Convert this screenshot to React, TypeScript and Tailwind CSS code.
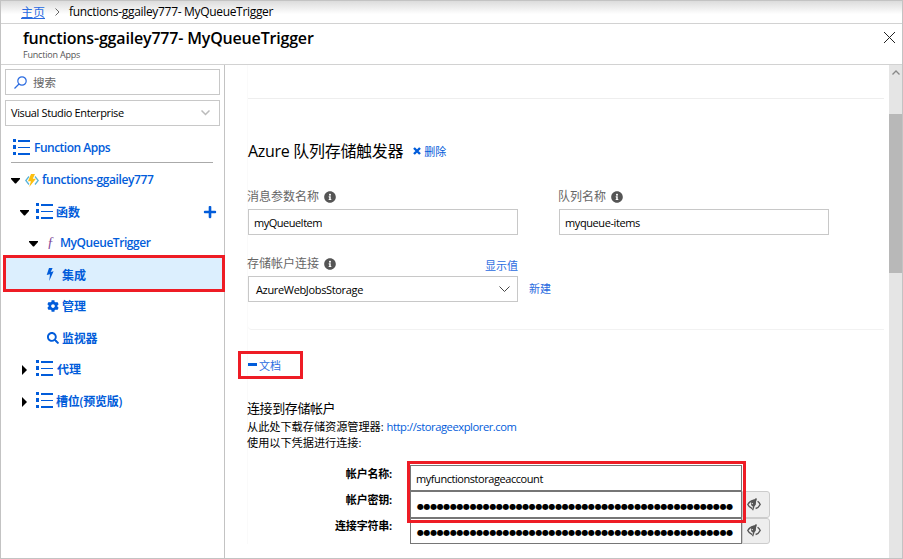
import type { ReactNode } from "react";
import { FaCog, FaInfoCircle, FaPlus, FaSearch } from "react-icons/fa";

const DOTS = "●".repeat(48);

function ListIcon({ className = "" }: { className?: string }) {
  return (
    <svg width="17" height="16" viewBox="0 0 17 16" fill="#015cda" className={"shrink-0 " + className} shapeRendering="crispEdges">
      <rect x="0" y="0" width="3" height="3" />
      <rect x="0" y="6" width="3" height="4" />
      <rect x="0" y="13" width="3" height="3" />
      <rect x="5" y="1" width="12" height="2" />
      <rect x="5" y="8" width="12" height="1" />
      <rect x="5" y="14" width="12" height="2" />
    </svg>
  );
}

function Caret({ open }: { open?: boolean }) {
  return open ? (
    <svg width="9" height="6" viewBox="0 0 9 6" className="mt-[2px] shrink-0"><path d="M0 0h9v1L5 5.500H4L0 1z" /></svg>
  ) : (
    <svg width="5" height="10" viewBox="0 0 5 10" className="mt-px shrink-0"><path d="M0 0v10L5 5z" /></svg>
  );
}

function FunctionAppIcon() {
  return (
    <svg width="14" height="13" viewBox="0 0 14 13" className="shrink-0" fill="none">
      <path d="M4 2.5L.8 6.5 4 10.5M10 2.5l3.2 4L10 10.5" stroke="#59b4d9" strokeWidth="1.3" />
      <path d="M6 0h4L7.800 4.700H11L4.200 13l1.700-5.800H3z" fill="#fcbf10" />
    </svg>
  );
}

function HiddenEye() {
  return (
    <svg width="14" height="13" viewBox="0 0 14 13" className="mb-[1px] shrink-0" fill="none" stroke="#555" strokeWidth="1.4">
      <path d="M5.200 10.600C3.200 9.800 1.600 8.300.8 6.500 2 4.300 4.200 2.600 7 2.200" />
      <path d="M9.300.3L8.700 7 6.200 8.800C3.600 8 3.300 4.500 5 2.600z" fill="#555" stroke="none" />
      <path d="M9.300.5L5.600 12.200" strokeWidth="1.300" />
      <path d="M10.600 3.200c1.100.8 2 1.900 2.600 3.300-.9 1.900-2.500 3.400-4.600 4" />
      <circle cx="5.300" cy="5.600" r=".7" fill="#eee" stroke="none" />
    </svg>
  );
}

function Label({ children }: { children: ReactNode }) {
  return (
    <div className="flex h-[20px] items-center gap-[5px] text-[12px] text-[#666]">
      <span className="-ml-px">{children}</span>
      <FaInfoCircle size={12} color="#555" className="mb-px" />
    </div>
  );
}

export default function App() {
  return (
    <div className="relative flex h-[559px] w-[903px] flex-col overflow-hidden whitespace-nowrap border border-[#c3c3c3] bg-white font-['Open_Sans','Noto_Sans_CJK_SC',sans-serif] text-[12px] leading-none text-black">
      <nav className="flex h-[23px] shrink-0 items-center border-b border-[#d2d2d2] bg-linear-to-b from-[#dcdcdc] to-white to-60% pl-[20px]">
        <a className="pt-px text-[12px] text-[#2a6be0] underline underline-offset-1">主页</a>
        <svg width="5" height="8" viewBox="0 0 5 8" className="ml-[10px] mr-[9px]" fill="none" stroke="#666"><path d="M.5.5L4 4 .5 7.500" /></svg>
        <span className="text-[12px] tracking-[-0.32px]">functions-ggailey777- MyQueueTrigger</span>
      </nav>
      <header className="flex h-[41px] shrink-0 justify-between border-b border-[#d2d2d2] pl-[21px] pr-[7px]">
        <div className="pt-[6px]">
          <h1 className="ml-px text-[16px] font-semibold leading-[16px] tracking-[-0.18px]">functions-ggailey777- MyQueueTrigger</h1>
          <p className="ml-px mt-[4px] text-[9px] leading-[10px] tracking-[-0.2px] text-[#555]">Function Apps</p>
        </div>
        <svg width="11" height="11" viewBox="0 0 11 11" className="mt-[8px]" stroke="#222"><path d="M0 0l11 11M11 0L0 11" /></svg>
      </header>

      <div className="flex min-h-0 flex-1">
        <aside className="w-[224px] shrink-0 border-r border-[#c3c3c3] pt-[4px] font-semibold text-[#015cda]">
          <div className="ml-[4px] flex h-[26px] w-[215px] items-center border border-[#c8c8c8] pl-[8px] font-normal text-[#666]">
            <svg width="13" height="13" viewBox="0 0 13 13" fill="none" stroke="#2a6be0" strokeWidth="1.2"><circle cx="8" cy="5" r="4.200" /><path d="M5 8L.5 12.500" /></svg>
            <span className="ml-[6px] pt-[2px] text-[11.500px]">搜索</span>
          </div>
          <div className="ml-[4px] mt-[5px] flex h-[26px] w-[215px] items-center justify-between border border-[#c8c8c8] pl-[5px] pr-[9px] font-normal text-black">
            <span className="pb-px text-[11px] tracking-[-0.37px]">Visual Studio Enterprise</span>
            <svg width="9" height="6" viewBox="0 0 9 6" fill="none" stroke="#bbb" strokeWidth="1.500" className="mb-px"><path d="M.5.5l4 4 4-4" /></svg>
          </div>
          <div className="ml-[10px] flex h-[37px] w-[202px] items-center border-b border-[#aaa] pl-[2px] pt-[6px]">
            <ListIcon />
            <span className="ml-[4px] pt-[2px] tracking-[-0.5px]">Function Apps</span>
          </div>
          <div className="flex h-[33px] items-center pl-[10px]">
            <Caret open />
            <span className="ml-[5px] pt-px"><FunctionAppIcon /></span>
            <span className="ml-[3px] pt-px tracking-[-0.38px]">functions-ggailey777</span>
          </div>
          <div className="flex h-[32px] items-center pl-[19px] pr-[7px]">
            <Caret open />
            <ListIcon className="mb-[3px] ml-[7px]" />
            <span className="ml-[3px] flex-1 pt-[2px] text-[12px]">函数</span>
            <FaPlus size={14} className="mb-px" />
          </div>
          <div className="flex h-[30px] items-center pl-[28px]">
            <Caret open />
            <span className="ml-[9px] w-[9px] font-['Liberation_Serif',serif] text-[14px] font-normal italic text-[#804998]">ƒ</span>
            <span className="ml-[4px] tracking-[-0.45px]">MyQueueTrigger</span>
          </div>
          <div className="ml-[2px] flex h-[32px] items-center bg-[#dceffe] pl-[43px]">
            <svg width="8" height="13" viewBox="0 0 8 13" className="shrink-0" fill="#015cda"><path d="M3 0h3.600L4.700 3.900 7.600 3.300 3.200 13 4 6.300.700 7z" /></svg>
            <span className="ml-[8px] pt-[3px]">集成</span>
          </div>
          <div className="flex h-[32px] items-center pl-[46px]"><FaCog size={12} /><span className="ml-[3px] pt-px">管理</span></div>
          <div className="flex h-[32px] items-center pl-[46px]"><FaSearch size={12} /><span className="ml-[3px] pt-[2px] tracking-[-0.3px]">监视器</span></div>
          <div className="flex h-[31px] items-center pl-[21px]"><Caret /><ListIcon className="mb-[3px] ml-[9px]" /><span className="ml-[4px] pt-px">代理</span></div>
          <div className="flex h-[32px] items-center pl-[21px]"><Caret /><ListIcon className="mb-[3px] ml-[9px]" /><span className="ml-[3px] pt-[2px] tracking-[-0.2px]">槽位(预览版)</span></div>
        </aside>

        <main className="min-w-0 flex-1 pl-[22px]">
          <div className="border-l border-[#fafafa]">
            <div className="mr-[5px] h-[34px] border-b border-[#eee]" />
            <section className="mr-[5px] h-[231px] rounded-bl-[4px] border-b border-[#f2f2f2]">
              <div className="flex h-[88px] items-center pt-[18px]">
                <h2 className="mb-[2px] text-[16px] tracking-[-0.3px]">Azure 队列存储触发器</h2>
                <a className="mb-[2px] ml-[10px] flex items-center gap-[3px] text-[11px] text-[#015cda]">
                  <svg width="8" height="8" viewBox="0 0 8 8" stroke="#015cda" strokeWidth="2.400"><path d="M1 1l6 6M7 1L1 7" /></svg>
                  删除
                </a>
              </div>
              <div className="flex gap-[41px]">
                <div className="w-[270px]">
                  <Label>消息参数名称</Label>
                  <div className="mt-[2px] flex h-[26px] items-center border border-[#c8c8c8] pl-[5px] text-[11px] tracking-[-0.5px]">myQueueItem</div>
                </div>
                <div className="w-[270px]">
                  <Label>队列名称</Label>
                  <div className="mt-[2px] flex h-[26px] items-center border border-[#c8c8c8] pl-[5px] text-[11px] tracking-[-0.4px]">myqueue-items</div>
                </div>
              </div>
              <div className="mt-[19px] flex w-[270px] items-center justify-between">
                <Label>存储帐户连接</Label>
                <a className="pt-[2px] text-[11px] text-[#2a6be0]">显示值</a>
              </div>
              <div className="mt-[2px] flex items-center">
                <div className="flex h-[26px] w-[270px] items-center justify-between border border-[#c8c8c8] pl-[7px] pr-[7px] text-[11px]">
                  <span className="tracking-[-0.34px]">AzureWebJobsStorage</span>
                  <svg width="11" height="7" viewBox="0 0 11 7" fill="none" stroke="#444"><path d="M.5.5l5 5 5-5" /></svg>
                </div>
                <a className="mb-[2px] ml-[11px] text-[11px] text-[#2a6be0]">新建</a>
              </div>
            </section>
            <div className="-ml-[10px] mt-[21px] flex h-[28px] w-[65px] items-center border-[3px] border-[#ee1c25] pl-[7px] text-[#2a6be0]">
              <span className="mb-[2px] mr-[2px] h-[3px] w-[9px] bg-[#015cda]" />
              <span className="text-[11px]">文档</span>
            </div>
            <section className="-ml-px pt-[19px]">
              <h3 className="mb-px text-[13px] leading-[20px] tracking-[-0.4px]">连接到存储帐户</h3>
              <p className="text-[11.200px] leading-[16px] tracking-[-0.04px]">从此处下载存储资源管理器: <a className="tracking-[-0.44px] text-[#015cda]">http://storageexplorer.com</a></p>
              <p className="text-[11.200px] leading-[16px] tracking-[-0.04px]">使用以下凭据进行连接:</p>
              <div className="mt-[14px] flex">
                <div className="-mt-[4px] w-[145px] shrink-0 text-right text-[11px] font-bold leading-[26px] tracking-[-0.2px]">
                  <div>帐户名称:</div>
                  <div>帐户密钥:</div>
                  <div>连接字符串:</div>
                </div>
                <div className="ml-[18px] w-[332px]">
                  <div className="flex h-[26px] items-center border border-[#767676] pl-[5px] text-[11px] tracking-[-0.44px]">myfunctionstorageaccount</div>
                  <div className="flex h-[27px] items-center border border-[#767676] pl-[6px] pt-[4px] font-['DejaVu_Sans',sans-serif] text-[8px] tracking-[-0.400px]">{DOTS}</div>
                  <div className="flex h-[26px] items-center border border-[#767676] pl-[6px] pt-[3px] font-['DejaVu_Sans',sans-serif] text-[8px] tracking-[-0.400px]">{DOTS}</div>
                </div>
                <div className="pt-[26px]">
                  <div className="flex h-[27px] w-[28px] items-center rounded-r-[3px] border border-[#ccc] bg-[#eee] pl-[4px]"><HiddenEye /></div>
                  <div className="flex h-[26px] w-[28px] items-center rounded-r-[3px] border border-[#ccc] bg-[#eee] pl-[4px]"><HiddenEye /></div>
                </div>
              </div>
            </section>
          </div>
        </main>

        <div className="w-[13px] shrink-0 bg-[#e5e5e5]">
          <div className="flex h-[49px] justify-center pt-[5px]">
            <svg width="8" height="5" viewBox="0 0 8 5" fill="none" stroke="#888" strokeWidth="1.300"><path d="M.5 4.500L4 1l3.500 3.500" /></svg>
          </div>
          <div className="h-[159px] bg-[#b8b8b8]" />
        </div>
      </div>

      <div className="absolute left-[2px] top-[254px] h-[37px] w-[222px] border-[3px] border-[#ee1c25]" />
      <div className="absolute left-[406px] top-[460px] h-[62px] w-[339px] border-[3px] border-[#ee1c25]" />
    </div>
  );
}
